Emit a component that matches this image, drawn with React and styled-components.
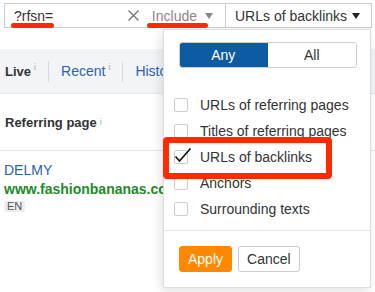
import React from 'react'
import styled, { createGlobalStyle } from 'styled-components'

const GlobalStyle = createGlobalStyle`
body {
    margin: 0;
    background: #fff;
}
* { box-sizing: border-box; }
`

const Page = styled.div`
position: relative;
width: 375px;
height: 292px;
overflow: hidden;
background: #fff;
font-family: "Liberation Sans", Arial, sans-serif;
font-size: 14px;
color: #333;`

const TopBar = styled.div`
display: flex;
padding: 3px 0 0 4px;`

const SearchBox = styled.div`
width: 222px;
height: 25px;
border: 1px solid #ccc;
display: flex;
align-items: center;
padding: 0 12px 0 9px;`

const Query = styled.span`
flex: 1;
color: #333;`

const ClearIcon = styled.svg`
width: 13px;
height: 13px;
margin-right: 12px;`

const IncludeLabel = styled.span`
color: #888;`

const Caret = styled.svg`
width: 8px;
height: 6px;
margin-left: ${props => props.gap}px;`

const FieldButton = styled.div`
width: 146px;
height: 25px;
border: 1px solid #ccc;
border-left: none;
display: flex;
align-items: center;
padding-left: 9px;
color: #333;`

const Tabs = styled.div`
margin-top: 21px;
height: 45px;
background: #f3f4f7;
border-bottom: 1px solid #e6e6e9;
display: flex;
align-items: center;`

const Tab = styled.div`
display: flex;
align-items: flex-start;
padding: 0 12px;
height: 21px;
line-height: 21px;
border-right: ${props => props.last ? 'none' : '1px solid #d8d8dc'};
font-weight: ${props => props.active ? 'bold' : 'normal'};
font-size: ${props => props.active ? '13px' : '14px'};
color: ${props => props.active ? '#333' : '#2a62b0'};
&:first-child { padding-left: 5px; }`

const Info = styled.sup`
font-size: 9px;
font-weight: normal;
color: #aaa;
margin-left: 3px;
line-height: 12px;`

const HeaderRow = styled.div`
height: 57px;
border-bottom: 1px solid #e4e4e4;
display: flex;
align-items: center;
padding-left: 5px;
font-weight: bold;
font-size: 13px;
color: #333;`

const DataRow = styled.div`
display: flex;
flex-direction: column;
align-items: flex-start;
padding: 10px 0 0 4px;`

const Title = styled.div`
color: #2a62b0;
line-height: 19px;`

const Url = styled.div`
color: #23892a;
font-weight: bold;
line-height: 19px;
white-space: nowrap;`

const Lang = styled.span`
margin-top: 2px;
background: #eceef1;
color: #555;
font-size: 11px;
padding: 0 3px;
line-height: 11px;
border-radius: 2px;`

const Dropdown = styled.div`
position: absolute;
left: 163px;
top: 29px;
width: 208px;
background: #fff;
border: 1px solid #ddd;
box-shadow: -2px 3px 10px rgba(0, 0, 0, 0.12);`

const Segmented = styled.div`
display: flex;
width: 178px;
height: 26px;
margin: 12px 0 0 15px;
border: 1px solid #ccc;
border-radius: 3px;
overflow: hidden;`

const Segment = styled.div`
flex: 1;
display: flex;
align-items: center;
justify-content: center;
background: ${props => props.active ? '#0b5ca2' : '#fff'};
color: ${props => props.active ? '#fff' : '#333'};
${props => props.active && 'margin: -1px 0 -1px -1px;'}`

const OptionList = styled.div`
padding: 24px 0 8px 10px;
border-bottom: 1px solid #e5e5e5;`

const Option = styled.div`
height: 26px;
display: flex;
align-items: center;
color: #333;`

const Box = styled.span`
position: relative;
width: 14px;
height: 14px;
border: 1px solid #ccc;
border-radius: 2px;
margin-right: 12px;
background: #fff;`

const Check = styled.svg`
position: absolute;
left: 0;
top: -3px;
overflow: visible;`

const Footer = styled.div`
display: flex;
gap: 6px;
padding: 15px;`

const Button = styled.div`
height: 26px;
padding: 0 8px;
display: flex;
align-items: center;
border-radius: 3px;
background: ${props => props.primary ? '#ff8800' : '#fff'};
border: 1px solid ${props => props.primary ? '#ff8800' : '#ccc'};
color: ${props => props.primary ? '#fff' : '#333'};`

const Underline = styled.div`
position: absolute;
left: ${props => props.x}px;
top: 23px;
width: ${props => props.w}px;
height: 5px;
border-radius: 3px;
background: #ff2a00;`

const Highlight = styled.div`
position: absolute;
left: 163px;
top: 137px;
width: 169px;
height: 42px;
border: 6px solid #ff2a00;
border-radius: 4px;`

const options = [
    'URLs of referring pages',
    'Titles of referring pages',
    'URLs of backlinks',
    'Anchors',
    'Surrounding texts'
]

const App = () => {
    return (
        <Page>
            <GlobalStyle />
            <TopBar>
                <SearchBox>
                    <Query>?rfsn=</Query>
                    <ClearIcon viewBox="0 0 13 13">
                        <path d="M1.5 1.5 L11.5 11.5 M11.5 1.5 L1.5 11.5" stroke="#777" strokeWidth="1.4" />
                    </ClearIcon>
                    <IncludeLabel>Include</IncludeLabel>
                    <Caret gap={8} viewBox="0 0 8 6">
                        <path d="M0 0 H8 L4 6 Z" fill="#888" />
                    </Caret>
                </SearchBox>
                <FieldButton>
                    URLs of backlinks
                    <Caret gap={5} viewBox="0 0 8 6">
                        <path d="M0 0 H8 L4 6 Z" fill="#222" />
                    </Caret>
                </FieldButton>
            </TopBar>
            <Tabs>
                <Tab active>Live<Info>i</Info></Tab>
                <Tab>Recent<Info>i</Info></Tab>
                <Tab last>Historical</Tab>
            </Tabs>
            <HeaderRow>Referring page<Info>i</Info></HeaderRow>
            <DataRow>
                <Title>DELMY</Title>
                <Url>www.fashionbananas.com/</Url>
                <Lang>EN</Lang>
            </DataRow>

            <Dropdown>
                <Segmented>
                    <Segment active>Any</Segment>
                    <Segment>All</Segment>
                </Segmented>
                <OptionList>
                    {options.map((o, i) => (
                        <Option key={o}>
                            <Box>
                                {i === 2 && (
                                    <Check width="16" height="14" viewBox="0 0 16 14">
                                        <path d="M0.5 8.5 L4.5 13 L15.5 0.5" fill="none" stroke="#111" strokeWidth="1.7" />
                                    </Check>
                                )}
                            </Box>
                            {o}
                        </Option>
                    ))}
                </OptionList>
                <Footer>
                    <Button primary>Apply</Button>
                    <Button>Cancel</Button>
                </Footer>
            </Dropdown>

            <Underline x={11} w={43} />
            <Underline x={147} w={61} />
            <Highlight />
        </Page>
    )
}

export default App
